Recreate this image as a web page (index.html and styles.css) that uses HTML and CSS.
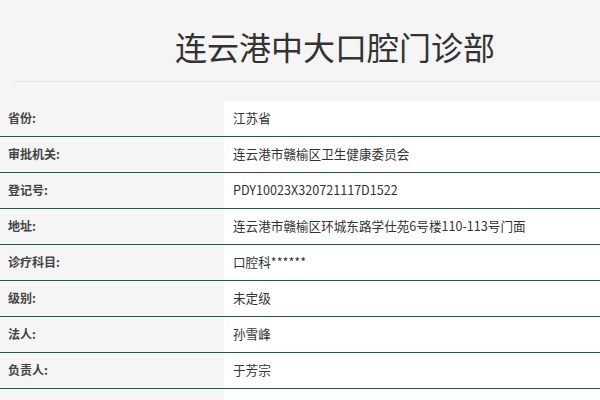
FILE: index.html
```html
<!DOCTYPE html>
<html lang="zh">
<head>
<meta charset="utf-8">
<link rel="stylesheet" href="styles.css">
</head>
<body>
<div class="header">
  <h1 class="title">连云港中大口腔门诊部</h1>
</div>
<div class="info">
  <div class="row"><div class="label">省份:</div><div class="value">江苏省</div></div>
  <div class="row"><div class="label">审批机关:</div><div class="value">连云港市赣榆区卫生健康委员会</div></div>
  <div class="row"><div class="label">登记号:</div><div class="value">PDY10023X320721117D1522</div></div>
  <div class="row"><div class="label">地址:</div><div class="value">连云港市赣榆区环城东路学仕苑6号楼110-113号门面</div></div>
  <div class="row"><div class="label">诊疗科目:</div><div class="value">口腔科******</div></div>
  <div class="row"><div class="label">级别:</div><div class="value">未定级</div></div>
  <div class="row"><div class="label">法人:</div><div class="value">孙雪峰</div></div>
  <div class="row"><div class="label">负责人:</div><div class="value">于芳宗</div></div>
  <div class="row"><div class="label"></div><div class="value"></div></div>
</div>
</body>
</html>
```
FILE: styles.css
```css
html, body {
  margin: 0;
  padding: 0;
  background: #f5f5f5;
  font-family: "Noto Sans CJK SC", "Noto Sans", sans-serif;
  color: #333;
  overflow: hidden;
}
.header {
  margin-left: 13px;
  height: 82px;
  border-bottom: 1px solid #e6e6e6;
  box-sizing: border-box;
}
.title {
  margin: 0;
  padding: 26px 0 0 162px;
  font-size: 32px;
  font-weight: normal;
  line-height: 40px;
  color: #333;
}
.info {
  margin-top: 19px;
}
.row {
  display: grid;
  grid-template-columns: 224px 1fr;
  height: 36px;
  border-bottom: 1px solid #1d5a38;
  box-sizing: border-box;
}
.label {
  padding: 0 0 3px 8px;
  font-size: 12px;
  font-weight: bold;
  color: #444;
  display: flex;
  align-items: center;
}
.value {
  background: #fff;
  padding: 0 0 3px 9px;
  font-size: 12.6px;
  color: #333;
  display: flex;
  align-items: center;
}
```
